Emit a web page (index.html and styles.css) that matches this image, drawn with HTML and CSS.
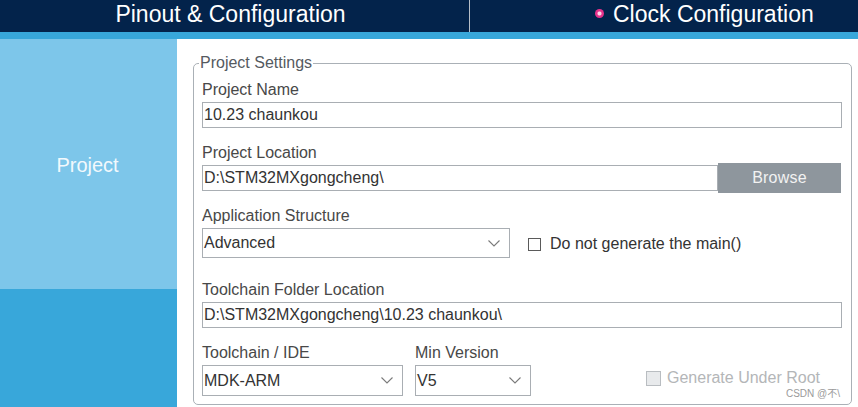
FILE: index.html
```html
<!DOCTYPE html>
<html lang="en">
<head>
<meta charset="utf-8">
<title>Project Manager</title>
<link rel="stylesheet" href="styles.css">
</head>
<body>
<div class="app">
  <header class="topbar">
    <div class="tab tab-pinout">Pinout &amp; Configuration</div>
    <div class="tab tab-clock"><span class="dot"></span>Clock Configuration</div>
  </header>
  <div class="stripe"></div>
  <div class="main">
    <aside class="sidebar">
      <div class="side-top">Project</div>
      <div class="side-bottom"></div>
    </aside>
    <section class="content">
      <fieldset class="settings">
        <legend>Project Settings</legend>

        <div class="group g1">
          <div class="label">Project Name</div>
          <div class="field">10.23 chaunkou</div>
        </div>

        <div class="group g2">
          <div class="label tight">Project Location</div>
          <div class="browse-row">
            <div class="field loc">D:\STM32MXgongcheng\</div>
            <div class="btn">Browse</div>
          </div>
        </div>

        <div class="group g3">
          <div class="label">Application Structure</div>
          <div class="row">
            <div class="select sel-app">Advanced<svg class="chev" viewBox="0 0 12 7" width="12" height="7"><polyline points="0.5,0.5 6,6 11.5,0.5" fill="none" stroke="#7a7a7a" stroke-width="1.1"/></svg></div>
            <label class="check"><span class="box"></span>Do not generate the main()</label>
          </div>
        </div>

        <div class="group g4">
          <div class="label">Toolchain Folder Location</div>
          <div class="field">D:\STM32MXgongcheng\10.23 chaunkou\</div>
        </div>

        <div class="group g5">
          <div class="row bottom-row">
            <div class="col col-ide">
              <div class="label">Toolchain / IDE</div>
              <div class="select sel-ide">MDK-ARM<svg class="chev" viewBox="0 0 12 7" width="12" height="7"><polyline points="0.5,0.5 6,6 11.5,0.5" fill="none" stroke="#7a7a7a" stroke-width="1.1"/></svg></div>
            </div>
            <div class="col col-ver">
              <div class="label">Min Version</div>
              <div class="select sel-ver">V5<svg class="chev" viewBox="0 0 12 7" width="12" height="7"><polyline points="0.5,0.5 6,6 11.5,0.5" fill="none" stroke="#7a7a7a" stroke-width="1.1"/></svg></div>
            </div>
            <label class="check disabled"><span class="box"></span>Generate Under Root</label>
          </div>
        </div>
      </fieldset>
      <div class="watermark">CSDN @不\</div>
    </section>
  </div>
</div>
</body>
</html>
```

FILE: styles.css
```css
* { box-sizing: border-box; }

html, body {
  margin: 0;
  padding: 0;
}

body {
  width: 858px;
  height: 407px;
  overflow: hidden;
  font-family: "Liberation Sans", Arial, "Noto Sans CJK SC", sans-serif;
  background: #ffffff;
}

.app {
  width: 858px;
  height: 407px;
  display: flex;
  flex-direction: column;
}

.topbar {
  height: 32px;
  background: #03234b;
  display: flex;
  color: #ffffff;
  font-size: 23px;
  line-height: 28px;
}

.tab-pinout {
  width: 470px;
  text-align: center;
  border-right: 1px solid #b7bec8;
  padding-right: 8px;
}

.tab-clock {
  flex: 1;
  padding-left: 125px;
  display: flex;
  align-items: flex-start;
}

.dot {
  width: 9px;
  height: 9px;
  margin-top: 9px;
  margin-right: 9px;
  border-radius: 50%;
  background: radial-gradient(circle, #ffd6ea 0 1.5px, #e5318b 2.5px);
  flex: none;
}

.stripe {
  height: 7px;
  background: #38a7da;
}

.main {
  flex: 1;
  display: flex;
}

.sidebar {
  width: 177px;
  display: flex;
  flex-direction: column;
}

.side-top {
  height: 250px;
  background: #7dc6ea;
  color: #f2f9fd;
  font-size: 20px;
  line-height: 24px;
  text-align: center;
  padding-top: 114px;
  padding-right: 2px;
}

.side-bottom {
  flex: 1;
  background: #38a7da;
}

.content {
  flex: 1;
  position: relative;
  padding: 15px 6px 0 16px;
  background: #ffffff;
}

.settings {
  margin: 0;
  width: 659px;
  height: 351px;
  border: 1px solid #aab0b6;
  border-radius: 5px;
  padding: 9px 9px 0 8px;
  min-width: 0;
}

.settings legend {
  font-size: 16px;
  line-height: 18px;
  color: #555a5f;
  padding: 0 1px;
  margin-left: -3px;
}

.label {
  font-size: 16px;
  line-height: 18px;
  color: #484848;
  margin-bottom: 3px;
  white-space: nowrap;
}

.label.tight { margin-bottom: 1px; }

.g2 { margin-top: 16px; }
.g3 { margin-top: 14px; }
.g4 { margin-top: 23px; }
.g5 { margin-top: 16px; }

.field {
  height: 26px;
  width: 640px;
  border: 1px solid #a9aeb3;
  font-size: 16px;
  line-height: 24px;
  color: #333333;
  padding-left: 1px;
  white-space: nowrap;
}

.browse-row {
  display: flex;
  align-items: center;
  height: 30px;
}

.field.loc {
  width: 516px;
}

.btn {
  width: 123px;
  height: 30px;
  background: #8e969d;
  color: #f2f2f2;
  font-size: 16px;
  line-height: 30px;
  text-align: center;
  letter-spacing: 0.2px;
}

.row {
  display: flex;
  align-items: center;
}

.select {
  position: relative;
  height: 30px;
  border: 1px solid #a9aeb3;
  font-size: 16px;
  line-height: 28px;
  color: #333333;
  padding-left: 1px;
  white-space: nowrap;
}

.chev {
  position: absolute;
  right: 9px;
  top: 11px;
}

.sel-app { width: 308px; }

.check {
  display: flex;
  align-items: center;
  font-size: 16px;
  line-height: 18px;
  color: #333333;
  white-space: nowrap;
}

.check .box {
  width: 13px;
  height: 13px;
  border: 1px solid #5a5a5a;
  background: #ffffff;
  margin-right: 9px;
  flex: none;
}

.g3 .check {
  margin-left: 18px;
  margin-top: 2px;
}

.bottom-row {
  align-items: flex-end;
}

.col-ide .select { width: 201px; height: 31px; line-height: 29px; }
.col-ver { margin-left: 12px; }
.col-ver .select { width: 116px; height: 31px; line-height: 29px; }

.check.disabled {
  margin-left: 115px;
  margin-bottom: 9px;
  color: #b4b6b8;
}

.check.disabled .box {
  width: 15px;
  height: 15px;
  border: 1px solid #b9bdc1;
  background: #e8eaec;
  margin-right: 6px;
}

.watermark {
  position: absolute;
  right: 18px;
  bottom: 8px;
  font-size: 10px;
  line-height: 11px;
  color: #9a9a9a;
  font-family: "Liberation Sans", "Noto Sans CJK SC", sans-serif;
}
```
